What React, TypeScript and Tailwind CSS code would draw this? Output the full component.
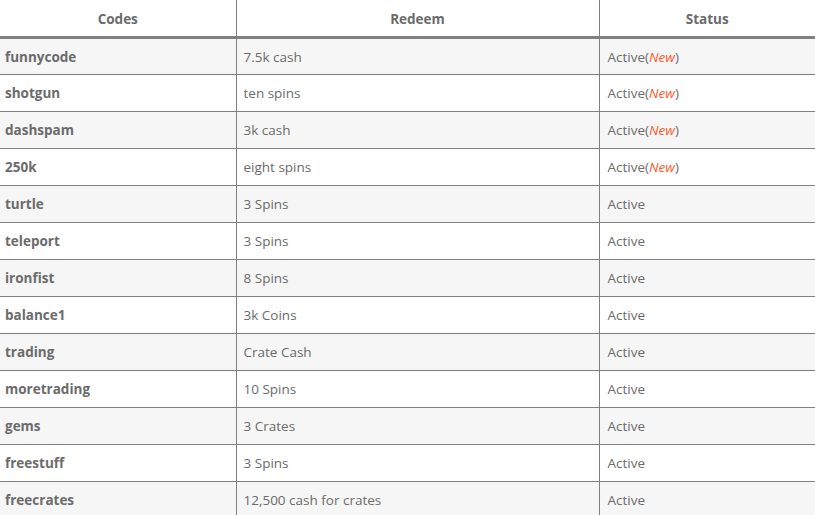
const rows: [string, string, boolean][] = [
  ["funnycode", "7.5k cash", true],
  ["shotgun", "ten spins", true],
  ["dashspam", "3k cash", true],
  ["250k", "eight spins", true],
  ["turtle", "3 Spins", false],
  ["teleport", "3 Spins", false],
  ["ironfist", "8 Spins", false],
  ["balance1", "3k Coins", false],
  ["trading", "Crate Cash", false],
  ["moretrading", "10 Spins", false],
  ["gems", "3 Crates", false],
  ["freestuff", "3 Spins", false],
  ["freecrates", "12,500 cash for crates", false],
];

export default function App() {
  return (
    <div className="w-[815px] h-[515px] overflow-hidden bg-white text-[13.5px] text-[#6b6b6b]" style={{ fontFamily: '"Open Sans", "Liberation Sans", sans-serif' }}>
      <table className="w-[815px] table-fixed border-collapse">
        <colgroup>
          <col className="w-[236px]" />
          <col className="w-[363px]" />
          <col />
        </colgroup>
        <thead>
          <tr className="h-[37px] border-b-[3px] border-[#808080]">
            <th className="font-bold text-center border-r border-[#808080] pt-[2px]">Codes</th>
            <th className="font-bold text-center border-r border-[#808080] pt-[2px]">Redeem</th>
            <th className="font-bold text-center pt-[2px]">Status</th>
          </tr>
        </thead>
        <tbody>
          {rows.map(([code, redeem, isNew], i) => (
            <tr key={code} className={`h-[37px] border-b border-[#808080] ${i % 2 === 0 ? "bg-[#f6f6f6]" : "bg-white"}`}>
              <td className="pl-[5px] pt-[2px] font-bold border-r border-[#808080]">{code}</td>
              <td className="pl-[7px] pt-[2px] border-r border-[#808080]">{redeem}</td>
              <td className="pl-[8px] pt-[2px]">
                Active
                {isNew && (
                  <>
                    (<em className="text-[#ff5a2c]">New</em>)
                  </>
                )}
              </td>
            </tr>
          ))}
        </tbody>
      </table>
    </div>
  );
}
